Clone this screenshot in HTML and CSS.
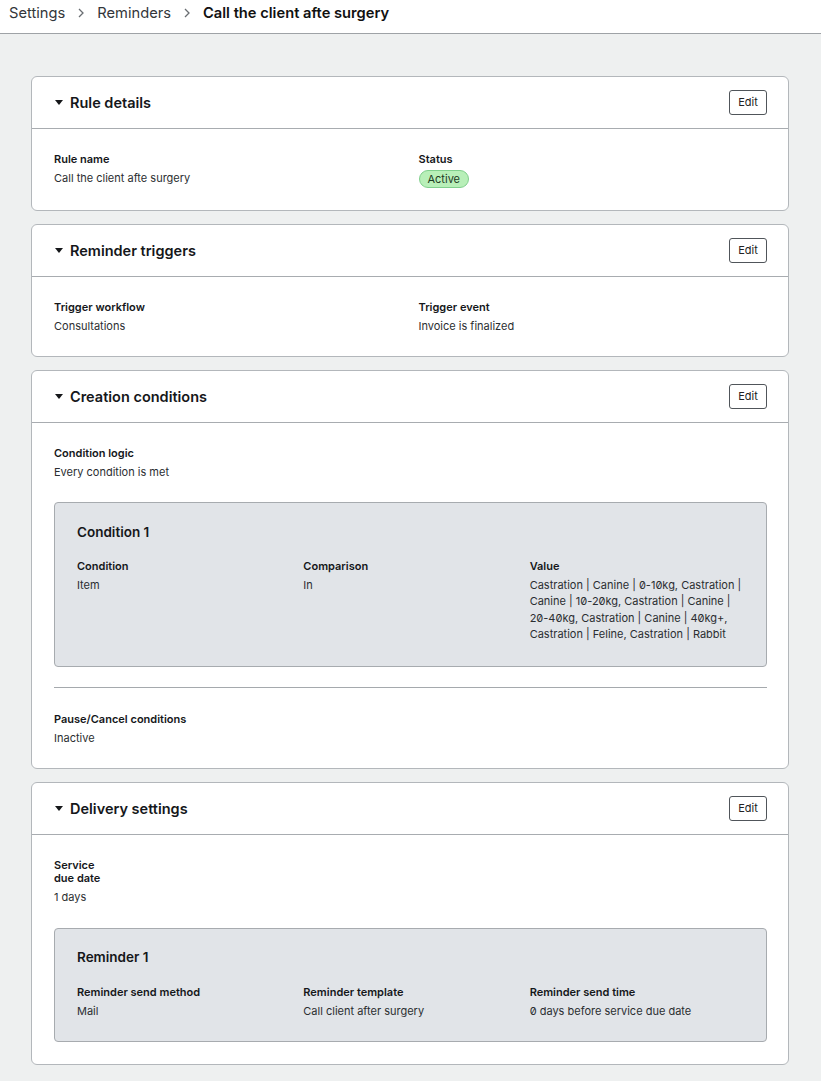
FILE: index.html
```html
<!DOCTYPE html>
<html lang="en">
<head>
    <meta charset="UTF-8">
    <meta name="viewport" content="width=device-width, initial-scale=1.0">
    <title>Call the client afte surgery - Reminders</title>
    <link rel="stylesheet" href="styles.css">
</head>
<body>
    <header class="topbar">
        <nav class="breadcrumb">
            <span class="crumb">Settings</span>
            <svg class="chevron" viewBox="0 0 6 10"><path d="M1 1l4 4-4 4"/></svg>
            <span class="crumb">Reminders</span>
            <svg class="chevron" viewBox="0 0 6 10"><path d="M1 1l4 4-4 4"/></svg>
            <span class="crumb current">Call the client afte surgery</span>
        </nav>
    </header>

    <main class="page">
        <section class="card">
            <div class="card-head">
                <h2 class="card-title"><span class="caret"></span>Rule details</h2>
                <button class="edit-btn">Edit</button>
            </div>
            <div class="card-body">
                <div class="grid-2">
                    <div class="field">
                        <div class="label">Rule name</div>
                        <div class="value">Call the client afte surgery</div>
                    </div>
                    <div class="field">
                        <div class="label">Status</div>
                        <div class="value"><span class="badge">Active</span></div>
                    </div>
                </div>
            </div>
        </section>

        <section class="card">
            <div class="card-head">
                <h2 class="card-title"><span class="caret"></span>Reminder triggers</h2>
                <button class="edit-btn">Edit</button>
            </div>
            <div class="card-body">
                <div class="grid-2">
                    <div class="field">
                        <div class="label">Trigger workflow</div>
                        <div class="value">Consultations</div>
                    </div>
                    <div class="field">
                        <div class="label">Trigger event</div>
                        <div class="value">Invoice is finalized</div>
                    </div>
                </div>
            </div>
        </section>

        <section class="card">
            <div class="card-head">
                <h2 class="card-title"><span class="caret"></span>Creation conditions</h2>
                <button class="edit-btn">Edit</button>
            </div>
            <div class="card-body">
                <div class="field">
                    <div class="label">Condition logic</div>
                    <div class="value">Every condition is met</div>
                </div>

                <div class="subbox">
                    <h3 class="subbox-title">Condition 1</h3>
                    <div class="grid-3">
                        <div class="field">
                            <div class="label">Condition</div>
                            <div class="value">Item</div>
                        </div>
                        <div class="field">
                            <div class="label">Comparison</div>
                            <div class="value">In</div>
                        </div>
                        <div class="field">
                            <div class="label">Value</div>
                            <div class="value multi">Castration | Canine | 0-10kg, Castration | Canine | 10-20kg, Castration | Canine | 20-40kg, Castration | Canine | 40kg+, Castration | Feline, Castration | Rabbit</div>
                        </div>
                    </div>
                </div>

                <hr class="divider">

                <div class="field">
                    <div class="label">Pause/Cancel conditions</div>
                    <div class="value">Inactive</div>
                </div>
            </div>
        </section>

        <section class="card">
            <div class="card-head">
                <h2 class="card-title"><span class="caret"></span>Delivery settings</h2>
                <button class="edit-btn">Edit</button>
            </div>
            <div class="card-body">
                <div class="field narrow">
                    <div class="label">Service due date</div>
                    <div class="value">1 days</div>
                </div>

                <div class="subbox subbox-tight">
                    <h3 class="subbox-title">Reminder 1</h3>
                    <div class="grid-3">
                        <div class="field">
                            <div class="label">Reminder send method</div>
                            <div class="value">Mail</div>
                        </div>
                        <div class="field">
                            <div class="label">Reminder template</div>
                            <div class="value">Call client after surgery</div>
                        </div>
                        <div class="field">
                            <div class="label">Reminder send time</div>
                            <div class="value">0 days before service due date</div>
                        </div>
                    </div>
                </div>
            </div>
        </section>
    </main>
</body>
</html>
```

FILE: styles.css
```css
body {
    font-family: Inter, "Noto Sans", Arial, sans-serif;
    font-feature-settings: "zero" 1;
    margin: 0;
    padding: 0;
    background-color: #eef0f0;
    color: #1b1d1f;
}

/* top breadcrumb bar */
.topbar {
    height: 33px;
    background-color: white;
    border-bottom: 1px solid #9ea2a6;
    display: flex;
    align-items: center;
    padding: 0 9px;
}
.breadcrumb {
    display: flex;
    align-items: center;
    gap: 13px;
    font-size: 14.7px;
    margin-top: -8px;
}
.crumb {
    color: #33363a;
}
.crumb.current {
    color: #111;
    font-weight: 600;
}
.chevron {
    width: 6px;
    height: 10px;
    fill: none;
    stroke: #6a6e72;
    stroke-width: 1.3;
}

.page {
    display: flex;
    flex-direction: column;
    gap: 13px;
    padding: 42px 32px 16px 31px;
}

/* cards */
.card {
    background-color: white;
    border: 1px solid #b3b7bb;
    border-radius: 6px;
}
.card-head {
    height: 51px;
    display: flex;
    align-items: center;
    justify-content: space-between;
    padding: 0 21px 0 22px;
    border-bottom: 1px solid #a8acb0;
}
.card-title {
    margin: 0;
    display: flex;
    align-items: center;
    gap: 7px;
    font-size: 14.5px;
    font-weight: 600;
    color: #15171a;
}
.caret {
    width: 0;
    height: 0;
    border-left: 4px solid transparent;
    border-right: 4px solid transparent;
    border-top: 5px solid #15171a;
    margin-left: 1px;
}
.edit-btn {
    font-family: inherit;
    font-size: 11px;
    color: #222;
    background-color: white;
    border: 1px solid #50555a;
    border-radius: 3px;
    width: 38px;
    height: 25px;
    padding: 0;
    margin-top: -1px;
    cursor: pointer;
}
.card-body {
    padding: 24px 21px 22px 22px;
}

/* label / value pairs */
.grid-2 {
    display: grid;
    grid-template-columns: 1fr 1fr;
    column-gap: 16px;
}
.grid-3 {
    display: grid;
    grid-template-columns: 1fr 1fr 1fr;
    column-gap: 12px;
}
.label {
    font-size: 11px;
    line-height: 13px;
    font-weight: 600;
    color: #15171a;
    margin-bottom: 4px;
}
.value {
    font-size: 11px;
    line-height: 16px;
    color: #2b2e31;
}
.value.multi {
    line-height: 16.33px;
}
.narrow {
    width: 60px;
}
.badge {
    display: inline-block;
    vertical-align: top;
    background-color: #b8efb8;
    border: 1px solid #80cf8c;
    border-radius: 9px;
    padding: 0 8px;
    line-height: 16px;
    color: #1d3a1f;
}

/* grey nested boxes */
.subbox {
    background-color: #e1e4e8;
    border: 1px solid #a7abaf;
    border-radius: 4px;
    padding: 19px 22px 24px 22px;
    margin-top: 22px;
}
.subbox-tight {
    margin-top: 23px;
    padding-top: 18px;
    padding-bottom: 22px;
}
.subbox-title {
    margin: 0 0 18px 0;
    font-size: 13.5px;
    line-height: 20px;
    font-weight: 600;
    color: #15171a;
}
.subbox-tight .subbox-title {
    margin-bottom: 19px;
}
.divider {
    border: none;
    border-top: 1px solid #a5a9ad;
    margin: 20px 0 25px 0;
}
```
